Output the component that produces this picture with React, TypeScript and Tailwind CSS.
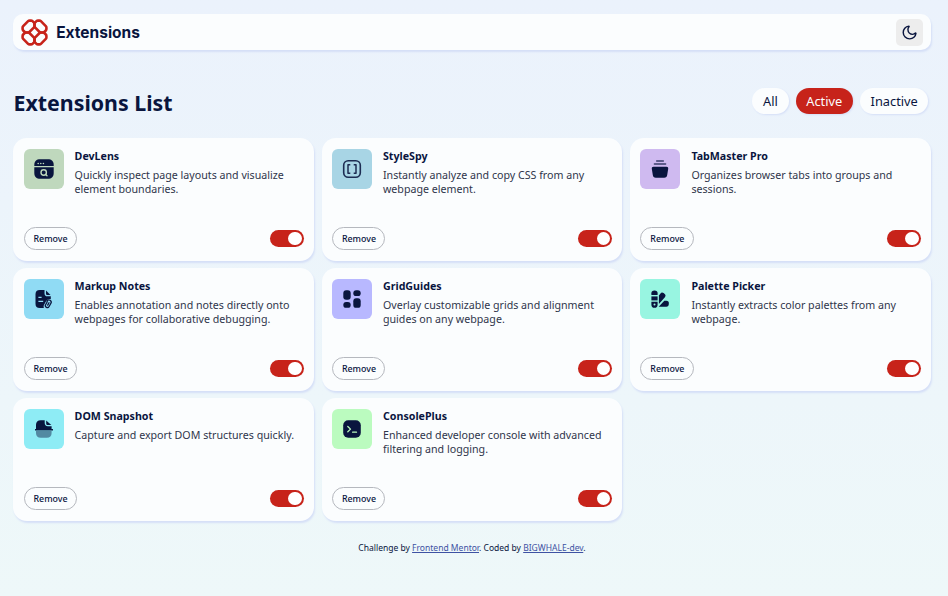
import { useState, type ReactNode } from "react";

const NAVY = "#09153E";

function Logo() {
  return (
    <svg width="27" height="27" viewBox="0 0 27 27" fill="none" stroke="#C7231A" strokeWidth="2.6" strokeLinejoin="round">
      {[0, 90, 180, 270].map((angle) => (
        <path
          key={angle}
          transform={`rotate(${angle} 13.5 13.5)`}
          d="M13.500 7.900V4.200L11.500 2.200Q10.900 1.600 10 1.600H8.600Q7.700 1.600 7.100 2.200L2.200 7.100Q1.600 7.700 1.600 8.600V10Q1.600 10.900 2.200 11.500L4.200 13.500H7.900Z"
        />
      ))}
    </svg>
  );
}

function MoonIcon() {
  return (
    <svg width="15" height="15" viewBox="0 0 22 22" fill="none" stroke={NAVY} strokeWidth="2.1" strokeLinecap="round" strokeLinejoin="round">
      <path d="M20.400 12.200c-.4 4.500-4.300 8.100-9.100 8.100-5.200 0-9.500-4.200-9.500-9.400 0-4.400 3.300-8.600 8.200-9.200.5 0 .6.400.2.900a6.600 6.600 0 0 0-1.500 4.100c0 4 3.200 7 6.900 7 1.500 0 2.900-.6 4.100-1.800.4-.3.700-.1.600.3Z" />
    </svg>
  );
}

const icons: Record<string, ReactNode> = {
  lens: (
    <>
      <path fill={NAVY} d="M.3 7V6C.3 2.200 2.400.3 6.200.3h7.600c3.800 0 5.900 1.900 5.900 5.700v1Z" />
      <path fill={NAVY} d="M.3 8.300h19.400V14c0 3.800-2.100 5.800-5.900 5.800H6.200C2.400 19.800.3 17.800.3 14Z" />
      <g fill="#BFD8BD">
        <circle cx="4.200" cy="4.500" r=".8" />
        <circle cx="6.800" cy="4.500" r=".8" />
        <circle cx="9.400" cy="4.500" r=".8" />
      </g>
      <circle cx="9.700" cy="13.500" r="2.700" fill="none" stroke="#BFD8BD" strokeWidth="1.400" />
      <path d="m11.700 15.500 1.300 1.300" stroke="#BFD8BD" strokeWidth="1.400" strokeLinecap="round" />
    </>
  ),
  brackets: (
    <g fill="none" stroke={NAVY} strokeLinejoin="round">
      <rect x="1.700" y="1.700" width="16.600" height="16.600" rx="4.500" strokeWidth="1.600" opacity=".88" />
      <path d="M8.300 5.800H6v8.400h2.300M11.700 5.800H14v8.400h-2.300" strokeWidth="1.500" opacity=".88" />
    </g>
  ),
  tabs: (
    <>
      <path d="M6.700 1.900h6.600M4.400 5h11.200" stroke={NAVY} strokeWidth="1.500" strokeLinecap="round" opacity=".75" />
      <path fill={NAVY} d="M3.500 7.800h13c1.300 0 1.900.7 1.700 2l-1 6.300c-.3 1.800-1.100 2.700-3 2.700H5.800c-1.900 0-2.700-.9-3-2.700l-1-6.300c-.2-1.300.4-2 1.700-2Z" />
    </>
  ),
  notes: (
    <>
      <path
        fill={NAVY}
        fillRule="evenodd"
        d="M5.800 1h4.700v3.200c0 2.100.9 3.100 3 3.100h3.300v2.900c-2.200-.6-3.800.3-4.900 2.300l-1.800 3.300c-.6 1.100-.6 2.200-.2 3.200H5.800c-2.900 0-4.300-1.400-4.300-4.300V5.300C1.500 2.400 2.900 1 5.800 1Zm-1.400 6.800v1.300h3.200V7.800Zm0 4v1.300h4.800v-1.300Z"
      />
      <path fill={NAVY} d="m12 1.500 4.500 4.500h-3c-1 0-1.500-.5-1.500-1.500Z" />
      <path d="m13.300 12.700-1.700 3a1.900 1.900 0 0 0 3.500 1.800l1.800-3.300a2.200 2.200 0 0 0-3.900-2.100m.7 4 1.300-2.400" fill="none" stroke={NAVY} strokeWidth="1.300" strokeLinecap="round" />
    </>
  ),
  grid: (
    <g fill={NAVY}>
      <rect x="1.300" y="1.200" width="7.400" height="9.500" rx="2.900" />
      <rect x="11.300" y="1.200" width="7.400" height="5.900" rx="2.900" />
      <rect x="1.300" y="12.900" width="7.400" height="5.900" rx="2.900" />
      <rect x="11.300" y="9.300" width="7.400" height="9.500" rx="2.900" />
    </g>
  ),
  palette: (
    <g fill={NAVY}>
      <path d="M1.400 6.100V4.300c0-2 1-2.900 3.100-2.900s3.100.9 3.100 2.900v1.800Z" />
      <path d="M1.400 7.400h6.200v4H1.400Z" />
      <path fillRule="evenodd" d="M1.400 12.700h6.200v3a3.100 3.100 0 0 1-6.200 0Zm3.100 1.900a1 1 0 1 0 0 2 1 1 0 0 0 0-2Z" />
      <path d="m8.900 6.500 1.600-2.100c.8-1 2-1.100 3.100-.3l1.100 1c1.100.9 1.100 2 .2 3.100l-6 6.700Z" />
      <path d="m14.300 11.700 2.100.1c1.700.1 2.400.9 2.400 2.300v1c0 1.700-.8 2.600-2.500 2.600H8.700Z" />
    </g>
  ),
  snapshot: (
    <>
      <path fill={NAVY} d="M2 10V6c0-3.200 1.600-4.800 4.800-4.800h3.900v2.900c0 2.100 1 3.100 3.100 3.100h3.800V10H19v1.400H1V10Z" />
      <path fill={NAVY} d="M12.200 1.500 17.300 6h-3.500c-1 0-1.600-.6-1.600-1.600Z" />
      <path fill={NAVY} opacity=".45" d="M2 11.900h15.600V14c0 3.200-1.600 4.800-4.800 4.800h-6C3.600 18.800 2 17.200 2 14Z" />
    </>
  ),
  console: (
    <>
      <rect x="1.200" y="1.200" width="17.600" height="17.600" rx="5" fill={NAVY} />
      <path d="m5.800 7.500 2.700 2.600-2.700 2.700M10.600 13.200h3.900" fill="none" stroke="#BBFBBF" strokeWidth="1.300" strokeLinecap="round" strokeLinejoin="round" />
    </>
  ),
};

const extensions = [
  { name: "DevLens", tile: "bg-[#BFD8BD]", icon: "lens", text: "Quickly inspect page layouts and visualize element boundaries." },
  { name: "StyleSpy", tile: "bg-[#A8D5E5]", icon: "brackets", text: "Instantly analyze and copy CSS from any webpage element." },
  { name: "TabMaster Pro", tile: "bg-[#CFBAF0]", icon: "tabs", text: "Organizes browser tabs into groups and sessions." },
  { name: "Markup Notes", tile: "bg-[#90DBF4]", icon: "notes", text: "Enables annotation and notes directly onto webpages for collaborative debugging." },
  { name: "GridGuides", tile: "bg-[#B8B8FF]", icon: "grid", text: "Overlay customizable grids and alignment guides on any webpage." },
  { name: "Palette Picker", tile: "bg-[#98F5E1]", icon: "palette", text: "Instantly extracts color palettes from any webpage." },
  { name: "DOM Snapshot", tile: "bg-[#8EECF5]", icon: "snapshot", text: "Capture and export DOM structures quickly." },
  { name: "ConsolePlus", tile: "bg-[#BBFBBF]", icon: "console", text: "Enhanced developer console with advanced filtering and logging." },
];

function Toggle() {
  const [on, setOn] = useState(true);
  return (
    <button
      role="switch"
      aria-checked={on}
      onClick={() => setOn(!on)}
      className={`flex h-[17px] w-[34px] items-center rounded-full px-[2px] ${on ? "justify-end bg-[#C7231A]" : "justify-start bg-[#C6C6C6]"}`}
    >
      <span className="size-[13.500px] rounded-full bg-white" />
    </button>
  );
}

function Card({ item }: { item: (typeof extensions)[number] }) {
  return (
    <article className="flex h-[123px] flex-col justify-between rounded-[14px] bg-[#FBFDFE] pt-[11px] pr-[10px] pb-[11px] pl-[10.400px] shadow-[1px_2px_2px_#D5DFF7]">
      <div className="flex gap-[11px]">
        <div className={`flex size-10 shrink-0 items-center justify-center rounded-[6px] ${item.tile}`}>
          <svg width="20" height="20" viewBox="0 0 20 20">{icons[item.icon]}</svg>
        </div>
        <div>
          <h2 className="text-[10.670px] leading-[15px] font-bold">{item.name}</h2>
          <p className="mt-[4px] text-[10.670px] leading-[14px] text-[#2F354B]">{item.text}</p>
        </div>
      </div>
      <div className="flex items-center justify-between">
        <button className="h-[23px] w-[53.400px] rounded-full border border-[#B5B8BE] pl-[0.600px] text-[8.890px] font-medium">Remove</button>
        <Toggle />
      </div>
    </article>
  );
}

export default function App() {
  return (
    <div className="min-h-[596px] bg-linear-to-b from-[#EBF2FC] to-[#EEF8F9] pt-[14px] pr-[17.300px] pl-[13.200px] font-['Noto_Sans',sans-serif] text-[#09153E]">
      <header className="flex h-9 items-center justify-between rounded-[10px] bg-[#FBFDFE] pr-2 pl-2 shadow-[1px_2px_2px_#D5DFF7]">
        <div className="flex items-center gap-2">
          <Logo />
          <span className="pt-[2px] font-['Inter',sans-serif] text-[15.500px] leading-none font-bold">Extensions</span>
        </div>
        <button className="flex size-[27px] items-center justify-center rounded-[5px] bg-[#EDEDED]">
          <MoonIcon />
        </button>
      </header>
      <div className="mt-[37px] flex h-[32px] items-start justify-between pr-[3px] pl-[0.400px]">
        <h1 className="text-[21.330px] leading-[32px] font-bold">Extensions List</h1>
        <div className="flex gap-[7px] pt-[1px] text-[12.800px]">
          <button className="h-[26px] w-[37px] rounded-full bg-[#FBFDFE] pt-[1px] pl-[0.600px] shadow-[1px_1px_2px_#D5DFF7]">All</button>
          <button className="h-[26px] w-[57px] rounded-full bg-[#C7231A] pt-[1px] text-[#FBFDFE] shadow-[1px_1px_2px_#D5DFF7]">Active</button>
          <button className="h-[26px] w-[68px] rounded-full bg-[#FBFDFE] pt-[1px] pl-[1px] shadow-[1px_1px_2px_#D5DFF7]">Inactive</button>
        </div>
      </div>
      <main className="mt-[19px] grid grid-cols-3 gap-x-[7.700px] gap-y-[7px]">
        {extensions.map((item) => (
          <Card key={item.name} item={item} />
        ))}
      </main>
      <footer className="mt-[20px] text-center text-[8.530px] leading-[14px]">
        Challenge by <a className="text-[#3E52A3] underline">Frontend Mentor</a>. Coded by{" "}
        <a className="text-[#3E52A3] underline">BIGWHALE-dev</a>.
      </footer>
    </div>
  );
}
